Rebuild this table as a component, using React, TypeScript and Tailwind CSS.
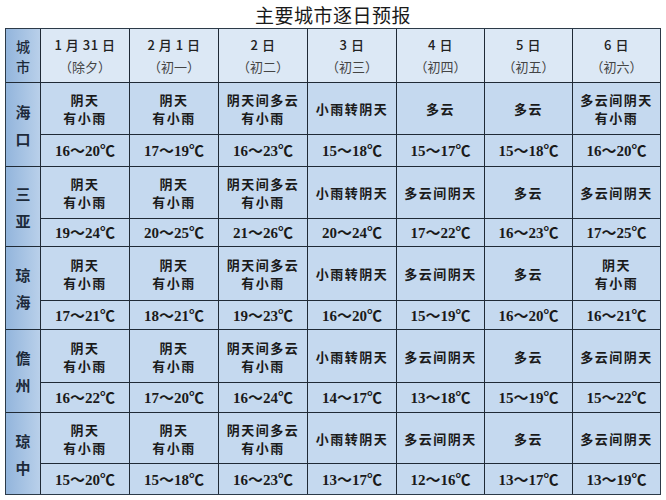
const days = [
  { d: '1 月 31 日', l: '（除夕）' },
  { d: '2 月 1 日', l: '（初一）' },
  { d: '2 日', l: '（初二）' },
  { d: '3 日', l: '（初三）' },
  { d: '4 日', l: '（初四）' },
  { d: '5 日', l: '（初五）' },
  { d: '6 日', l: '（初六）' },
];

const cities = [
  {
    name: ['海', '口'],
    weather: ['阴天\n有小雨', '阴天\n有小雨', '阴天间多云\n有小雨', '小雨转阴天', '多云', '多云', '多云间阴天\n有小雨'],
    temp: ['16～20℃', '17～19℃', '16～23℃', '15～18℃', '15～17℃', '15～18℃', '16～20℃'],
  },
  {
    name: ['三', '亚'],
    weather: ['阴天\n有小雨', '阴天\n有小雨', '阴天间多云\n有小雨', '小雨转阴天', '多云间阴天', '多云', '多云间阴天'],
    temp: ['19～24℃', '20～25℃', '21～26℃', '20～24℃', '17～22℃', '16～23℃', '17～25℃'],
  },
  {
    name: ['琼', '海'],
    weather: ['阴天\n有小雨', '阴天\n有小雨', '阴天间多云\n有小雨', '小雨转阴天', '多云间阴天', '多云', '阴天\n有小雨'],
    temp: ['17～21℃', '18～21℃', '19～23℃', '16～20℃', '15～19℃', '16～20℃', '16～21℃'],
  },
  {
    name: ['儋', '州'],
    weather: ['阴天\n有小雨', '阴天\n有小雨', '阴天间多云\n有小雨', '小雨转阴天', '多云间阴天', '多云', '多云间阴天'],
    temp: ['16～22℃', '17～20℃', '16～24℃', '14～17℃', '13～18℃', '15～19℃', '15～22℃'],
  },
  {
    name: ['琼', '中'],
    weather: ['阴天\n有小雨', '阴天\n有小雨', '阴天间多云\n有小雨', '小雨转阴天', '多云间阴天', '多云', '多云间阴天'],
    temp: ['15～20℃', '15～18℃', '16～23℃', '13～17℃', '12～16℃', '13～17℃', '13～19℃'],
  },
];

const cjk = "font-['Noto_Sans_CJK_SC',sans-serif]";
const serif = "font-['Liberation_Serif','Noto_Sans_CJK_SC',serif]";

export default function App() {
  return (
    <div className="w-[666px] h-[500px] bg-white relative">
      <div className="w-[656px] ml-[5px] h-[28px] flex items-center justify-center">
        <span className={`${cjk} text-[19px] text-[#1a1a1a] tracking-[0.5px] leading-none`}>主要城市逐日预报</span>
      </div>
      <div
        className="ml-[5px] w-[656px] grid gap-px bg-[#1f2a36] border border-[#2c3a48]
          grid-cols-[34px_88px_88px_88px_88px_87px_87px_87px]
          grid-rows-[53px_51px_31px_51px_27px_53px_28px_52px_29px_50px_30px]"
      >
        <div className={`bg-gradient-to-r from-[#93b5dc] to-[#b9d0ea] flex flex-col items-center justify-center gap-[6px] ${cjk} text-[14px] text-[#1d2a3a] font-medium leading-none`}>
          <span>城</span>
          <span>市</span>
        </div>
        {days.map((d) => (
          <div key={d.d} className="bg-[#dce8f5] flex flex-col items-center justify-center gap-[9px] leading-none">
            <span className={`${cjk} text-[13px] text-[#222] font-medium tracking-[0.5px] whitespace-pre`}>{d.d}</span>
            <span className={`${cjk} text-[13px] text-[#444]`}>{d.l}</span>
          </div>
        ))}
        {cities.map((c) => (
          <CityRows key={c.name.join('')} c={c} />
        ))}
      </div>
    </div>
  );
}

function CityRows({ c }: { c: (typeof cities)[number] }) {
  return (
    <>
      <div className={`row-span-2 bg-gradient-to-r from-[#93b5dc] to-[#b9d0ea] flex flex-col items-center justify-center gap-[12px] ${cjk} text-[15px] font-bold text-[#1d2a3a] leading-none`}>
        <span>{c.name[0]}</span>
        <span>{c.name[1]}</span>
      </div>
      {c.weather.map((w, i) => (
        <div
          key={'w' + i}
          className={`bg-[#c5d9ef] flex flex-col items-center justify-center gap-[5px] ${cjk} text-[13px] font-semibold tracking-[1.5px] text-[#1a1a1a] leading-none`}
        >
          {w.split('\n').map((line) => (
            <span key={line}>{line}</span>
          ))}
        </div>
      ))}
      {c.temp.map((t, i) => (
        <div
          key={'t' + i}
          className={`bg-[#c5d9ef] flex items-center justify-center pt-[2px] ${serif} text-[15px] font-bold text-[#1a1a1a] leading-none`}
        >
          {t}
        </div>
      ))}
    </>
  );
}
